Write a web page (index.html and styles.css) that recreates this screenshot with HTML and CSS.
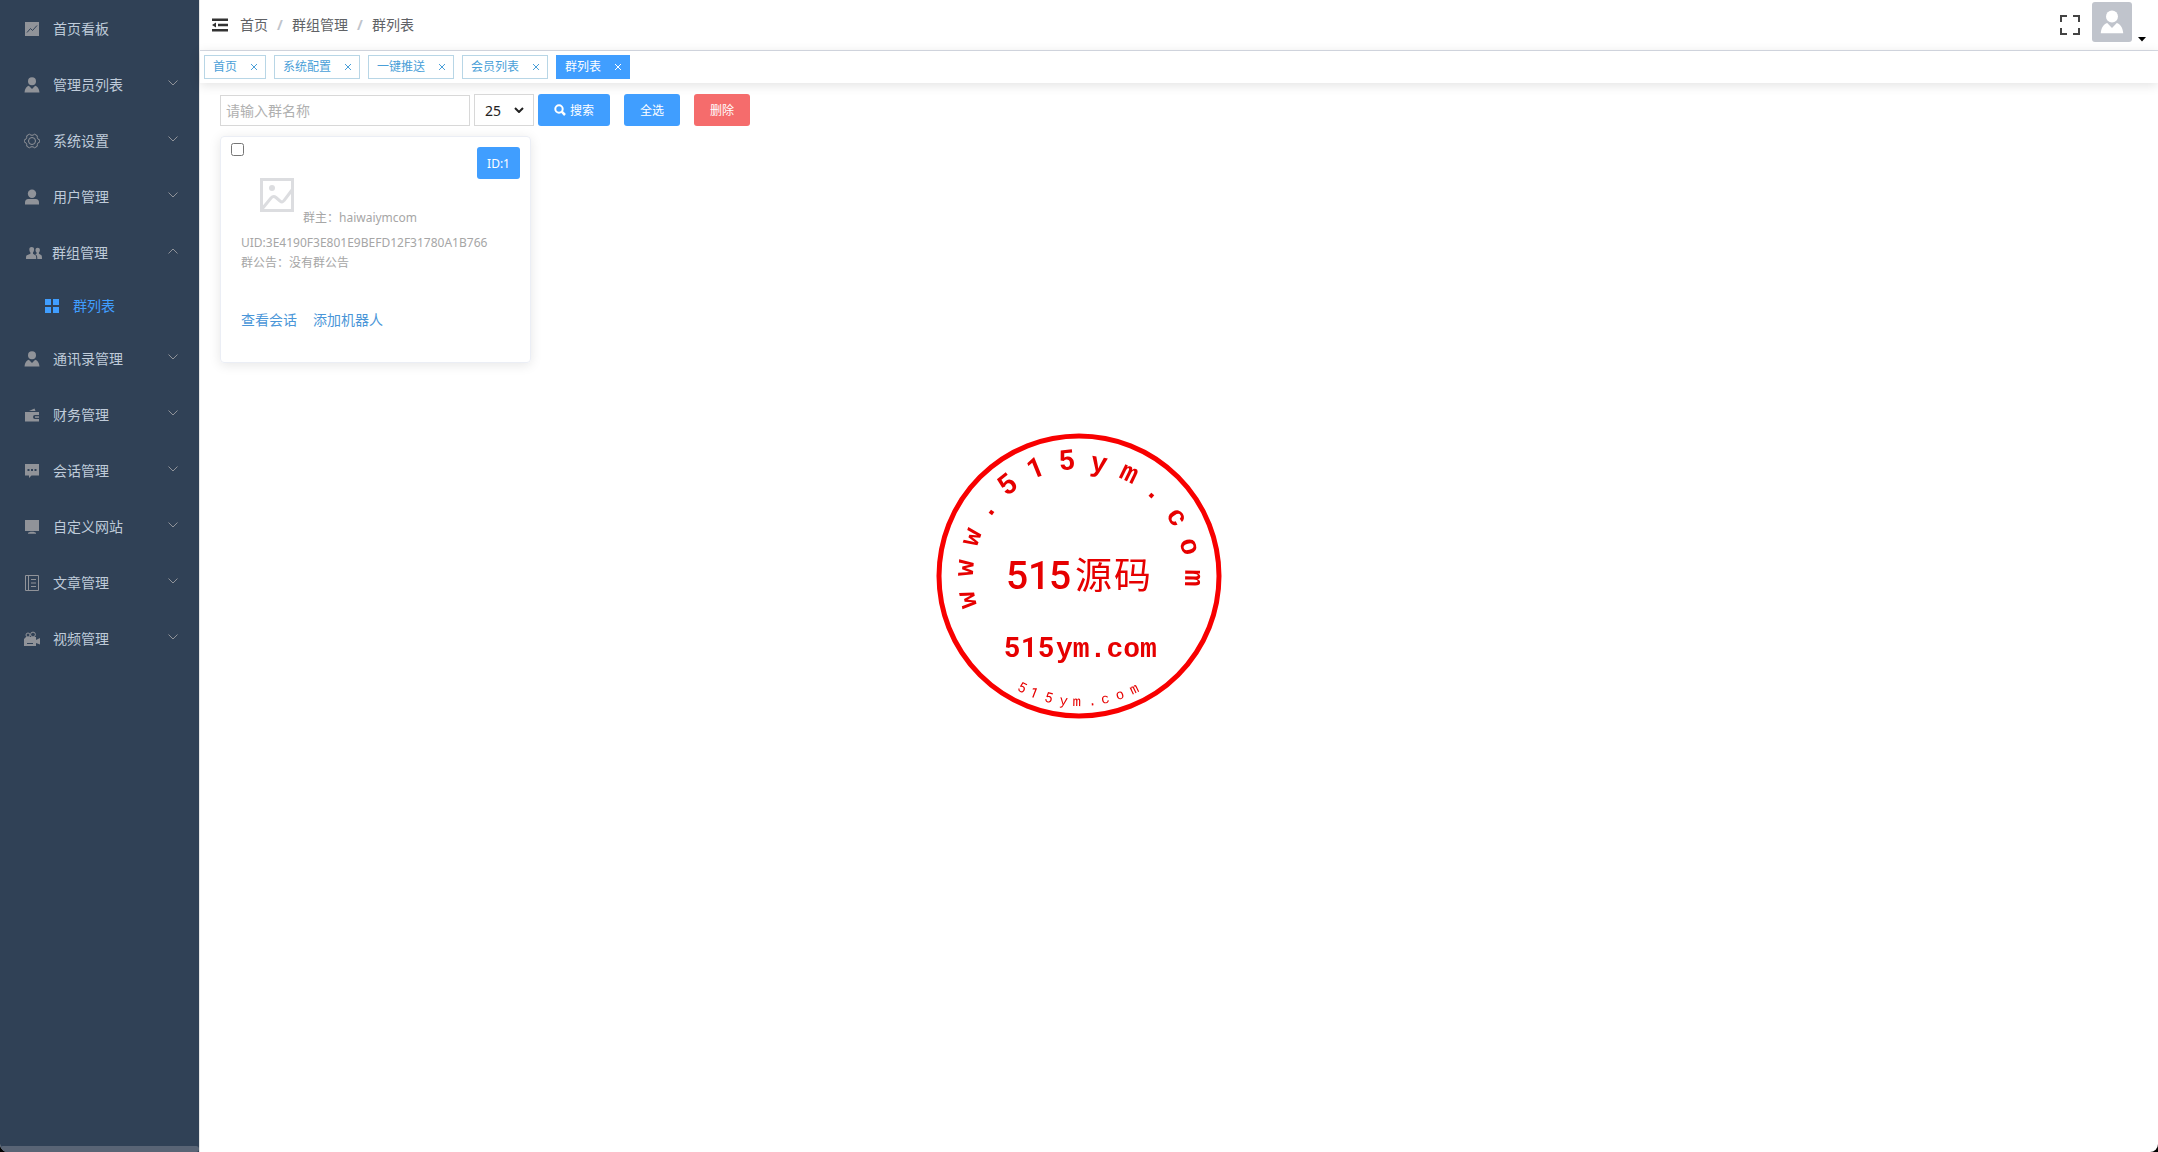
FILE: index.html
```html
<!DOCTYPE html>
<html lang="zh-CN">
<head>
<meta charset="utf-8">
<title>群列表</title>
<link rel="stylesheet" href="styles.css">
</head>
<body>
<svg class="defs" aria-hidden="true">
  <symbol id="down" viewBox="0 0 12 12"><path d="M1.500 3.500L6 8l4.500-4.500" fill="none" stroke="currentColor"/></symbol>
  <symbol id="admin" viewBox="0 0 16 16"><circle cx="8" cy="4.300" r="4"/><path d="M.5 15.500c.3-3.600 2-6.200 4.300-6.800L8 12l3.200-3.300c2.300.6 4 3.200 4.300 6.800z"/></symbol>
  <symbol id="user" viewBox="0 0 16 16"><circle cx="8" cy="4.700" r="4.200"/><path d="M1 15.500v-1.300c0-3.200 1-4.200 4-4.200h6c3 0 4 1 4 4.200v1.300z"/></symbol>
  <symbol id="x" viewBox="0 0 8 8"><path d="M1 1l6 6M7 1L1 7" fill="none" stroke="currentColor"/></symbol>
</svg>
<div class="app">
  <aside class="sidebar">
    <nav class="menu">
      <a class="item" href="#"><svg class="icon" viewBox="0 0 16 16"><path d="M1 1h14v14H1z"/><path class="cut" d="M3 11.500L6.500 7.500l2 2L13 4.500"/></svg><span>首页看板</span></a>
      <a class="item" href="#"><svg class="icon"><use href="#admin"/></svg><span>管理员列表</span><svg class="arrow"><use href="#down"/></svg></a>
      <a class="item" href="#"><svg class="icon line" viewBox="0 0 16 16"><path d="M5.400 1.200L7 2.200h2l1.600-1 2.600 1.500.1 1.900.9 1.700 1.600.7v2l-1.600.7-.9 1.700-.1 1.900-2.600 1.500-1.600-1H7l-1.600 1-2.600-1.500-.1-1.900-.9-1.700L.2 9V7l1.600-.7.9-1.700.1-1.900z"/><circle cx="8" cy="8" r="3.500"/></svg><span>系统设置</span><svg class="arrow"><use href="#down"/></svg></a>
      <a class="item" href="#"><svg class="icon"><use href="#user"/></svg><span>用户管理</span><svg class="arrow"><use href="#down"/></svg></a>
      <a class="item group" href="#"><svg class="icon" viewBox="0 0 16 16"><path d="M3.300 4.500C3.300 2.700 4.300 2 5.700 2s2.400.7 2.400 2.500c0 1.300-.4 2.300-1.100 3v1.200l2.400 1.500c.7.400.8 1 .8 3.800H0c0-2.800.2-3.400.9-3.800l3.500-1.500V7.500c-.7-.7-1.100-1.700-1.100-3z"/><path d="M9.500 5c0-1.600.9-2.300 2.200-2.300s2.200.7 2.200 2.300c0 1.200-.4 2-1 2.600v1.200l2.200 1.200c.8.500.9 1.500.9 4h-4.700c0-3-.2-3.800-2.100-4.800l1.400-.4V7.600c-.7-.6-1.100-1.400-1.100-2.600z"/></svg><span>群组管理</span><svg class="arrow up"><use href="#down"/></svg></a>
      <a class="item sub" href="#"><svg class="icon" viewBox="0 0 16 16"><path d="M1 1h6v6H1zM9 1h6v6H9zM1 9h6v6H1zM9 9h6v6H9z"/></svg><span>群列表</span></a>
      <a class="item" href="#"><svg class="icon"><use href="#admin"/></svg><span>通讯录管理</span><svg class="arrow"><use href="#down"/></svg></a>
      <a class="item" href="#"><svg class="icon" viewBox="0 0 16 16"><path d="M1 5h14v3h-4a2 2 0 0 0 0 4h4v2.500H1zM5 4l5.500-2.500L11.500 4z"/><path d="M11 9.300h4v1.500h-4z"/></svg><span>财务管理</span><svg class="arrow"><use href="#down"/></svg></a>
      <a class="item" href="#"><svg class="icon" viewBox="0 0 16 16"><path fill-rule="evenodd" d="M1 1h14v11.500H7.500L5 15v-2.500H1zM3.500 6v2h2V6zM7 6v2h2V6zM10.500 6v2h2V6z"/></svg><span>会话管理</span><svg class="arrow"><use href="#down"/></svg></a>
      <a class="item" href="#"><svg class="icon" viewBox="0 0 16 16"><path d="M1 1h14v11H1zM6.500 12.800h3l2.500 1v1H4v-1z"/></svg><span>自定义网站</span><svg class="arrow"><use href="#down"/></svg></a>
      <a class="item" href="#"><svg class="icon line" viewBox="0 0 16 16"><path d="M1.500.5h13v15h-13zM4.500.5v15M7 4.500h5M7 8h5M7 11.500h5"/></svg><span>文章管理</span><svg class="arrow"><use href="#down"/></svg></a>
      <a class="item" href="#"><svg class="icon" viewBox="0 0 16 16"><circle class="ring" cx="4" cy="4" r="2"/><circle class="ring" cx="9" cy="3.500" r="2.400"/><path fill-rule="evenodd" d="M2 6h10v3l4-2v6.500l-4-1.500v3H0V8zM3 12v1h6v-1z"/></svg><span>视频管理</span><svg class="arrow"><use href="#down"/></svg></a>
    </nav>
    <div class="scroll"></div>
  </aside>
  <div class="main">
    <header class="top">
      <button class="bare fold" aria-label="折叠菜单"><svg width="16" height="14" viewBox="0 0 16 14" fill="#333"><path d="M0 .5h16v2.500H0zM6 5.800h10v2.400H6zM0 11h16v2.500H0zM0 7l4-2.500v5z"/></svg></button>
      <nav class="crumbs"><a href="#">首页</a><b>/</b><a href="#">群组管理</a><b>/</b><span>群列表</span></nav>
      <button class="bare full" aria-label="全屏"><svg width="20" height="20" viewBox="0 0 20 20" fill="none" stroke="#444" stroke-width="2"><path d="M1 7V1h6M13 1h6v6M19 13v6h-6M7 19H1v-6"/></svg></button>
      <button class="bare user" aria-label="用户"><span class="avatar"><svg width="24" height="24"><use href="#admin"/></svg></span><svg class="caret" width="8" height="5" viewBox="0 0 8 5"><path d="M0 0h8L4 4.500z"/></svg></button>
    </header>
    <nav class="tags">
      <a class="tag" href="#">首页<svg><use href="#x"/></svg></a>
      <a class="tag" href="#">系统配置<svg><use href="#x"/></svg></a>
      <a class="tag" href="#">一键推送<svg><use href="#x"/></svg></a>
      <a class="tag" href="#">会员列表<svg><use href="#x"/></svg></a>
      <a class="tag on" href="#">群列表<svg><use href="#x"/></svg></a>
    </nav>
    <main class="content">
      <form class="filter">
        <input class="name" type="text" placeholder="请输入群名称" aria-label="群名称">
        <span class="size"><select aria-label="每页数量"><option>25</option></select><svg width="10" height="6" viewBox="0 0 10 6"><path d="M1 1l4 4 4-4" fill="none" stroke="#222" stroke-width="2"/></svg></span>
        <button class="btn" type="button"><svg width="12" height="12" viewBox="0 0 12 12" fill="none" stroke="#fff" stroke-width="2"><circle cx="5" cy="5" r="3.700"/><path d="M7.700 7.700L11 11" stroke-width="2.500"/></svg>搜索</button>
        <button class="btn next" type="button">全选</button>
        <button class="btn next danger" type="button">删除</button>
      </form>
      <article class="card">
        <div class="head"><input type="checkbox" aria-label="选择群 1"><button class="btn id" type="button">ID:1</button></div>
        <div class="owner"><svg width="34" height="34" viewBox="0 0 34 34" fill="none" stroke="#dcdde0" stroke-width="3"><path d="M1.500 1.500h31v31h-31zM2 31l9-11c2-2 3-2 5-.5l4 3.500c2 1.500 3 1 4-.5l8-10.500"/><circle cx="12" cy="10" r="3" fill="#dcdde0" stroke="none"/></svg><span>群主：haiwaiymcom</span></div>
        <p class="uid">UID:3E4190F3E801E9BEFD12F31780A1B766</p>
        <p>群公告：没有群公告</p>
        <div class="links"><a href="#">查看会话</a><a href="#">添加机器人</a></div>
      </article>
    </main>
  </div>
</div>
<svg class="seal" viewBox="-144 -144 288 288">
  <circle r="140" fill="none" stroke="#f80000" stroke-width="5"/>
  <g class="arc">
    <text y="-106" transform="rotate(-102)">w</text><text y="-106" transform="rotate(-86)">w</text><text y="-106" transform="rotate(-70)">w</text><text y="-106" transform="rotate(-54)">.</text>
    <text class="num" y="-107" transform="rotate(-38)">5</text><text class="num" y="-107" transform="rotate(-22)">1</text><text class="num" y="-107" transform="rotate(-6)">5</text>
    <text y="-106" transform="rotate(10)">y</text><text y="-106" transform="rotate(26)">m</text><text y="-106" transform="rotate(42)">.</text><text y="-106" transform="rotate(59)">c</text><text y="-106" transform="rotate(75)">o</text><text y="-106" transform="rotate(91)">m</text>
  </g>
  <text class="title" x="-73 -51 -30 -4 35" y="13">515<tspan class="han">源码</tspan></text>
  <text class="site num" x="-75 -58 -41" y="81">515</text>
  <text class="site" x="-23" y="81">ym.com</text>
  <g class="arc small">
    <text class="num" y="130" transform="rotate(27)">5</text><text class="num" y="130" transform="rotate(21)">1</text><text class="num" y="130" transform="rotate(14)">5</text><text y="130" transform="rotate(7)">y</text><text y="130" transform="rotate(1)">m</text><text y="130" transform="rotate(-6)">.</text><text y="130" transform="rotate(-12)">c</text><text y="130" transform="rotate(-19)">o</text><text y="130" transform="rotate(-26)">m</text>
  </g>
</svg>
</body>
</html>
```
FILE: styles.css
```css
* { box-sizing: border-box; }
html { background: #000; }
body {
  margin: 0;
  font-family: "Noto Sans", "Noto Sans CJK SC", sans-serif;
  font-size: 14px;
  line-height: 20px;
  color: #606266;
}
a { color: inherit; text-decoration: none; }
button, input, select { font-family: inherit; margin: 0; }
.defs { display: none; }
.app {
  display: flex;
  min-height: 100vh;
  border-radius: 0 0 8px 8px;
  overflow: hidden;
  background: #fff;
}

.sidebar {
  flex: none;
  width: 200px;
  display: flex;
  flex-direction: column;
  justify-content: space-between;
  background: #304156;
  border-right: 1px solid #e6e6e6;
}
.menu { padding-top: 1px; }
.item {
  display: flex;
  align-items: center;
  height: 56px;
  padding: 0 20px 0 24px;
  color: #bfcbd9;
}
.icon { width: 16px; height: 16px; margin-right: 13px; fill: #909399; }
.icon.line { fill: none; stroke: #909399; }
.cut { fill: none; stroke: #304156; }
.ring { fill: none; stroke: #909399; }
.arrow { width: 12px; height: 12px; margin: -4px 0 0 auto; color: #909399; }
.arrow.up { transform: rotate(180deg); }
.group { padding-left: 26px; }
.group .icon { margin-right: 10px; }
.sub { height: 50px; padding-left: 44px; color: #409eff; }
.sub .icon { fill: #409eff; }
.scroll { height: 6px; border-radius: 3px; background: #596475; }

.main { flex: 1; min-width: 0; }
.top {
  display: flex;
  align-items: center;
  height: 51px;
  padding: 0 12px;
  border-bottom: 1px solid #d8dce5;
}
.bare { display: flex; padding: 0; border: 0; background: none; }
.crumbs { display: flex; margin-left: 12px; }
.crumbs b { width: 24px; text-align: center; color: #c0c4cc; }
.full { margin-left: auto; }
.user { margin-left: 12px; align-items: flex-end; gap: 6px; padding-bottom: 6px; }
.avatar {
  display: flex;
  align-items: center;
  justify-content: center;
  width: 40px;
  height: 40px;
  border-radius: 3px;
  background: #c0c4cc;
  fill: #fff;
}
.tags {
  display: flex;
  gap: 8px;
  height: 32px;
  padding: 4px;
  box-shadow: 0 2px 12px rgba(0, 0, 0, .12);
}
.tag {
  display: flex;
  align-items: center;
  height: 24px;
  padding: 0 7px 0 8px;
  border: 1px solid #b8d6e6;
  font-size: 12px;
  color: #4a9fd8;
}
.tag svg { width: 8px; height: 8px; margin-left: 13px; }
.tag.on { background: #409eff; border-color: #409eff; color: #fff; }

.content { padding: 11px 20px; }
.filter { display: flex; align-items: center; gap: 4px; }
.name {
  width: 250px;
  height: 31px;
  padding: 0 5px;
  border: 1px solid #d8d8d8;
  font-size: 14px;
}
.name::placeholder { color: #b0b0b0; }
.size { display: grid; align-items: center; }
.size select, .size svg { grid-area: 1 / 1; }
.size svg { justify-self: end; margin-right: 10px; }
.size select {
  width: 60px;
  height: 32px;
  padding: 0 10px;
  border: 1px solid #d8d8d8;
  background: #fff;
  appearance: none;
  font-size: 14px;
  color: #222;
}
.btn {
  display: flex;
  align-items: center;
  gap: 4px;
  height: 32px;
  padding: 0 16px;
  border: 0;
  border-radius: 3px;
  background: #409eff;
  color: #fff;
  font-size: 12px;
}
.next { margin-left: 10px; }
.danger { background: #f56c6c; }

.card {
  width: 311px;
  height: 227px;
  margin-top: 10px;
  padding: 0 10px 0 20px;
  border: 1px solid #ebeef5;
  border-radius: 4px;
  box-shadow: 0 2px 12px rgba(0, 0, 0, .1);
  font-size: 12px;
  color: #a6a6a6;
}
.head { display: flex; justify-content: space-between; align-items: flex-start; }
.head input { width: 13px; height: 13px; margin: 6px 0 0 -10px; }
.id { margin-top: 10px; padding: 0 10px; }
.owner { display: flex; align-items: flex-end; gap: 9px; padding-left: 19px; height: 49px; }
.owner svg { margin-bottom: 16px; }
.card p { margin: 0; }
.card .uid { margin-top: 5px; }
.links { display: flex; gap: 16px; margin-top: 37px; font-size: 14px; color: #4a96d8; }

/* stamp laid over the middle of the window */
.seal {
  position: fixed;
  left: 50%;
  top: 50%;
  width: 288px;
  height: 288px;
  margin: -144px 0 0 -144px;
  fill: #e60000;
  pointer-events: none;
}
.arc text { text-anchor: middle; }
.arc, .site { font: bold 28px "Liberation Mono", monospace; }
.arc.small { font-size: 14px; font-weight: normal; }
.seal .num { font-family: Roboto, sans-serif; }
.title { font: 500 39px Roboto, sans-serif; }
.han { font: 37px "Noto Sans CJK SC", sans-serif; }
```
